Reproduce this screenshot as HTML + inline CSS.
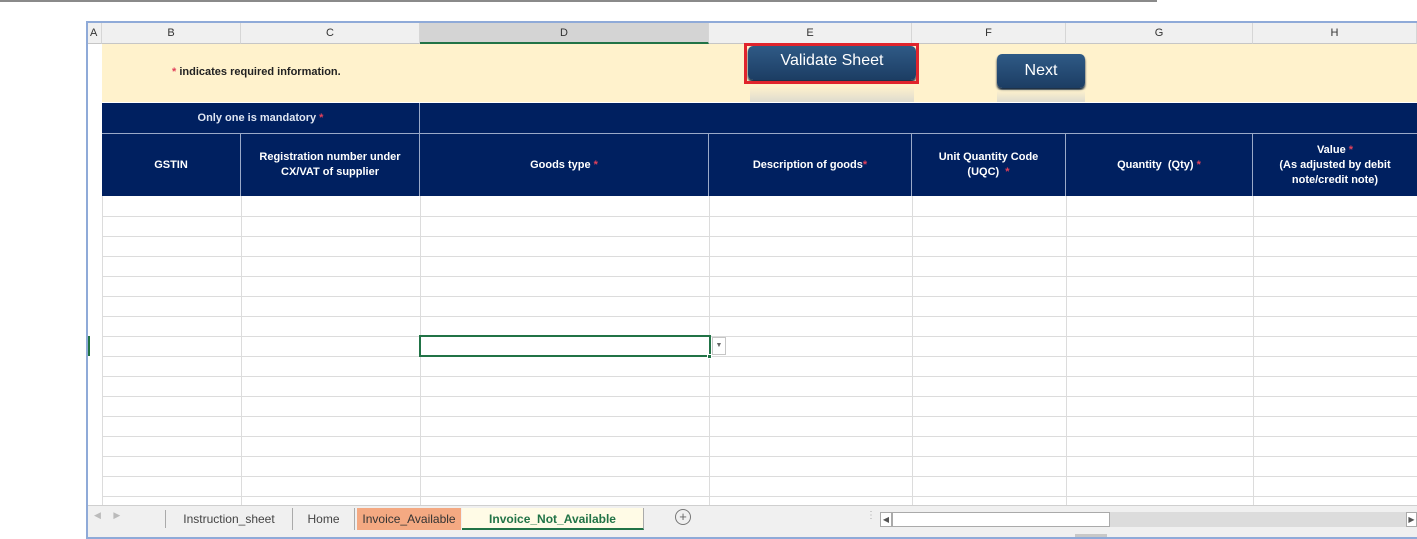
<!DOCTYPE html>
<html><head><style>
*{margin:0;padding:0;box-sizing:border-box}
body{width:1417px;height:539px;background:#fff;position:relative;overflow:hidden;font-family:"Liberation Sans",Arial,sans-serif}
.a{position:absolute}
.ch{position:absolute;top:23px;height:21px;background:#f0f0f0;border-right:1px solid #d6d6d6;border-bottom:1px solid #c6c6c6;font-size:11px;color:#333;text-align:center;line-height:21px}
.hd{position:absolute;top:134px;height:62px;background:#002060;color:#fff;font-weight:bold;font-size:11px;display:flex;align-items:center;justify-content:center;text-align:center;line-height:15px;border-right:1px solid #9aa9c8}
.hd>div{display:block}
.r{color:#e0405a}
.hl{position:absolute;left:102px;width:1315px;height:1px;background:#dcdcdc}
.vl{position:absolute;top:196px;height:309px;width:1px;background:#dcdcdc}
.btn{position:absolute;background:linear-gradient(#2f5a86,#1c3d63);border-radius:5px;color:#fff;font-size:16px;text-align:center;box-shadow:0 2px 2px #0a1f3a}
.tab{position:absolute;top:508px;height:22px;font-size:12px;line-height:22px;color:#444;text-align:center}
</style></head><body>
<div class="a" style="left:0;top:0;width:1157px;height:2px;background:#8a8a8a"></div>
<div class="a" style="left:86px;top:21px;width:1331px;height:518px;border:2px solid #8faad8;border-right:none"></div>
<div class="a" style="left:88px;top:23px;width:1329px;height:514px;background:#fff"></div>
<div class="ch" style="left:88px;width:14px;text-align:left;padding-left:2px">A</div>
<div class="ch" style="left:102px;width:139px">B</div>
<div class="ch" style="left:241px;width:179px">C</div>
<div class="ch" style="left:420px;width:289px;background:#d4d4d4;border-bottom:2px solid #217346">D</div>
<div class="ch" style="left:709px;width:203px">E</div>
<div class="ch" style="left:912px;width:154px">F</div>
<div class="ch" style="left:1066px;width:187px">G</div>
<div class="ch" style="left:1253px;width:164px">H</div>
<div class="a" style="left:102px;top:44px;width:1315px;height:58px;background:#fff2cc"></div>
<div class="a" style="left:172px;top:66px;font-size:11px;font-weight:bold;color:#222"><span class="r">*</span> indicates required information.</div>
<div class="btn" style="left:748px;top:46px;width:168px;height:34px;line-height:30px">Validate Sheet</div>
<div class="a" style="left:744px;top:43px;width:175px;height:41px;border:3px solid #e0242c"></div>
<div class="a" style="left:750px;top:86px;width:164px;height:16px;background:linear-gradient(#fff2cc,#c8ccd0);opacity:.6"></div>
<div class="btn" style="left:997px;top:54px;width:88px;height:34px;line-height:34px">Next</div>
<div class="a" style="left:997px;top:90px;width:88px;height:12px;background:linear-gradient(#fff2cc,#c8ccd0);opacity:.6"></div>
<div class="a" style="left:102px;top:103px;width:1315px;height:30px;background:#002060"></div>
<div class="a" style="left:102px;top:103px;width:318px;height:30px;color:#dfe6f3;font-size:11px;font-weight:bold;text-align:center;line-height:30px;border-right:1px solid #9aa9c8">Only one is mandatory <span class="r">*</span></div>
<div class="a" style="left:102px;top:133px;width:1315px;height:1px;background:#9aa9c8"></div>
<div class="hd" style="left:102px;width:139px"><div>GSTIN</div></div>
<div class="hd" style="left:241px;width:179px"><div>Registration number under<br>CX/VAT of supplier</div></div>
<div class="hd" style="left:420px;width:289px"><div>Goods type&nbsp;<span class="r">*</span></div></div>
<div class="hd" style="left:709px;width:203px"><div>Description of goods<span class="r">*</span></div></div>
<div class="hd" style="left:912px;width:154px"><div>Unit Quantity Code<br>(UQC) &nbsp;<span class="r">*</span></div></div>
<div class="hd" style="left:1066px;width:187px"><div>Quantity &nbsp;(Qty)&nbsp;<span class="r">*</span></div></div>
<div class="hd" style="left:1253px;width:164px;border:none"><div>Value <span class="r">*</span><br>(As adjusted by debit<br>note/credit note)</div></div>
<div class="hl" style="top:216px"></div><div class="hl" style="top:236px"></div><div class="hl" style="top:256px"></div><div class="hl" style="top:276px"></div><div class="hl" style="top:296px"></div><div class="hl" style="top:316px"></div><div class="hl" style="top:336px"></div><div class="hl" style="top:356px"></div><div class="hl" style="top:376px"></div><div class="hl" style="top:396px"></div><div class="hl" style="top:416px"></div><div class="hl" style="top:436px"></div><div class="hl" style="top:456px"></div><div class="hl" style="top:476px"></div><div class="hl" style="top:496px"></div>
<div class="vl" style="left:102px"></div><div class="vl" style="left:241px"></div><div class="vl" style="left:420px"></div><div class="vl" style="left:709px"></div><div class="vl" style="left:912px"></div><div class="vl" style="left:1066px"></div><div class="vl" style="left:1253px"></div>
<div class="a" style="left:88px;top:336px;width:2px;height:20px;background:#217346"></div>
<div class="a" style="left:419px;top:335px;width:292px;height:22px;border:2px solid #217346"></div>
<div class="a" style="left:707px;top:354px;width:5px;height:5px;background:#217346;border:1px solid #fff"></div>
<div class="a" style="left:712px;top:337px;width:14px;height:18px;border:1px solid #c6c6c6;background:#fff;font-size:7px;color:#666;text-align:center;line-height:16px">▼</div>
<div class="a" style="left:88px;top:505px;width:1329px;height:32px;background:#f0f0f0;border-top:1px solid #cfcfcf"></div>
<div class="a" style="left:94px;top:510px;font-size:9px;color:#bbb">◀ &nbsp;&nbsp;&nbsp;&nbsp;▶</div>
<div class="a" style="left:165px;top:510px;width:1px;height:18px;background:#aaa"></div>
<div class="tab" style="left:166px;width:127px;border-right:1px solid #aaa">Instruction_sheet</div>
<div class="tab" style="left:293px;width:62px;border-right:1px solid #aaa">Home</div>
<div class="tab" style="left:357px;width:104px;background:#f4a982;color:#333">Invoice_Available</div>
<div class="tab" style="left:462px;width:182px;background:#fffbe6;color:#217346;font-weight:bold;border-bottom:2px solid #217346;border-right:1px solid #aaa">Invoice_Not_Available</div>
<div class="a" style="left:675px;top:509px;width:16px;height:16px;border:1px solid #777;border-radius:50%;font-size:13px;line-height:13px;text-align:center;color:#666">+</div>
<div class="a" style="left:866px;top:510px;font-size:10px;color:#aaa">⋮</div>
<div class="a" style="left:880px;top:512px;width:12px;height:15px;border:1px solid #aaa;background:#fff;font-size:8px;line-height:13px;text-align:center;color:#555">◀</div>
<div class="a" style="left:892px;top:512px;width:218px;height:15px;border:1px solid #aaa;background:#fff"></div>
<div class="a" style="left:1110px;top:512px;width:296px;height:15px;background:#dcdcdc"></div>
<div class="a" style="left:1406px;top:512px;width:11px;height:15px;border:1px solid #aaa;background:#fff;font-size:8px;line-height:13px;text-align:center;color:#555">▶</div>
<div class="a" style="left:1075px;top:534px;width:32px;height:3px;background:#c8c8c8"></div>
</body></html>
